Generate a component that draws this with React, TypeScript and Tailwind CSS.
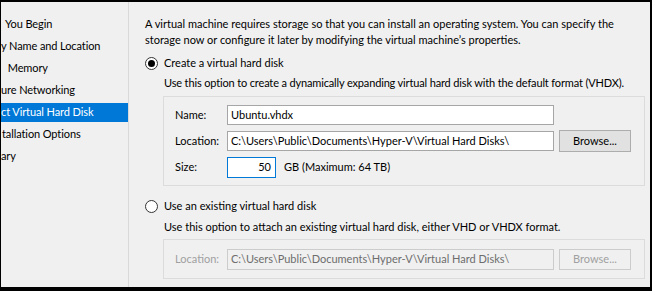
import React from "react";

const font = { fontFamily: 'Lato, "Segoe UI", sans-serif' };

function Radio({ checked }: { checked: boolean }) {
  return (
    <svg width="13" height="13" viewBox="0 0 13 13" className="shrink-0">
      <circle cx="6.5" cy="6.5" r="6" fill="#ffffff" stroke="#333333" strokeWidth="1" />
      {checked && <circle cx="6.5" cy="6.5" r="3.5" fill="#000000" />}
    </svg>
  );
}

const items = [
  "You Begin",
  "y Name and Location",
  " Memory",
  "ure Networking",
  "ct Virtual Hard Disk",
  "tallation Options",
  "ary",
];

export default function App() {
  return (
    <div
      className="w-[652px] h-[291px] bg-[#f0f0f0] border-t-[2px] border-l-[1px] border-r-[2px] border-b-[4px] border-black flex text-[11px] text-black overflow-hidden whitespace-nowrap"
      style={font}
    >
      {/* Sidebar */}
      <div className="w-[128px] shrink-0 pt-[11px] border-r border-[#d9d9d9] text-[11px] tracking-[-0.1px]">
        {items.map((t, i) => (
          <div key={i} className="h-[22px] flex items-center">
            <div
              className={
                "w-full h-[19px] flex items-center whitespace-pre overflow-hidden " +
                (i === 4 ? "bg-[#0078d7] text-white" : "")
              }
            >
              <span className={i === 0 || i === 2 ? "pl-[4px]" : i === 5 ? "pl-[1px]" : "pl-0"}>{t}</span>
            </div>
          </div>
        ))}
      </div>

      {/* Content */}
      <div className="flex-1 pl-[16px] pt-[14px] pr-[6px]">
        <div className="leading-[16px]">
          <div>A virtual machine requires storage so that you can install an operating system. You can specify the</div>
          <div>storage now or configure it later by modifying the virtual machine’s properties.</div>
        </div>

        <div className="mt-[7px] h-[16px] flex items-center gap-[6px]">
          <Radio checked />
          <span>Create a virtual hard disk</span>
        </div>
        <div className="mt-[4px] pl-[19px] leading-[16px] tracking-[-0.15px]">
          Use this option to create a dynamically expanding virtual hard disk with the default format (VHDX).
        </div>

        <div className="mt-[5px] ml-[18px] w-[482px] border border-[#dcdcdc] pt-[8px] pb-[8px] pl-[11px] flex flex-col gap-[6px]">
          <div className="flex items-center h-[20px]">
            <span className="w-[52px]">Name:</span>
            <div className="w-[327px] h-[20px] bg-white border border-[#a6a6a6] flex items-center px-[3px]">Ubuntu.vhdx</div>
          </div>
          <div className="flex items-center h-[20px]">
            <span className="w-[52px]">Location:</span>
            <div className="w-[327px] h-[20px] bg-white border border-[#a6a6a6] flex items-center px-[3px] overflow-hidden">
              C:\Users\Public\Documents\Hyper-V\Virtual Hard Disks\
            </div>
            <div className="ml-[5px] w-[72px] h-[22px] bg-[#e1e1e1] border border-[#adadad] flex items-center justify-center">
              Browse...
            </div>
          </div>
          <div className="flex items-center h-[20px]">
            <span className="w-[52px]">Size:</span>
            <div className="w-[49px] h-[21px] bg-white border border-[#0078d7] flex items-center justify-end px-[4px]">50</div>
            <span className="ml-[8px]">GB (Maximum: 64 TB)</span>
          </div>
        </div>

        <div className="mt-[12px] h-[16px] flex items-center gap-[6px]">
          <Radio checked={false} />
          <span>Use an existing virtual hard disk</span>
        </div>
        <div className="mt-[5px] pl-[19px] leading-[16px]">
          Use this option to attach an existing virtual hard disk, either VHD or VHDX format.
        </div>

        <div className="mt-[4px] ml-[18px] w-[482px] border border-[#dcdcdc] pt-[9px] pb-[8px] pl-[11px]">
          <div className="flex items-center h-[21px]">
            <span className="w-[52px] text-[#a0a0a0]">Location:</span>
            <div className="w-[327px] h-[21px] bg-[#f0f0f0] border border-[#cccccc] flex items-center px-[3px] text-[#6d6d6d] overflow-hidden">
              C:\Users\Public\Documents\Hyper-V\Virtual Hard Disks\
            </div>
            <div className="ml-[5px] w-[72px] h-[21px] bg-[#f0f0f0] border border-[#cccccc] flex items-center justify-center text-[#a0a0a0]">
              Browse...
            </div>
          </div>
        </div>
      </div>
    </div>
  );
}
